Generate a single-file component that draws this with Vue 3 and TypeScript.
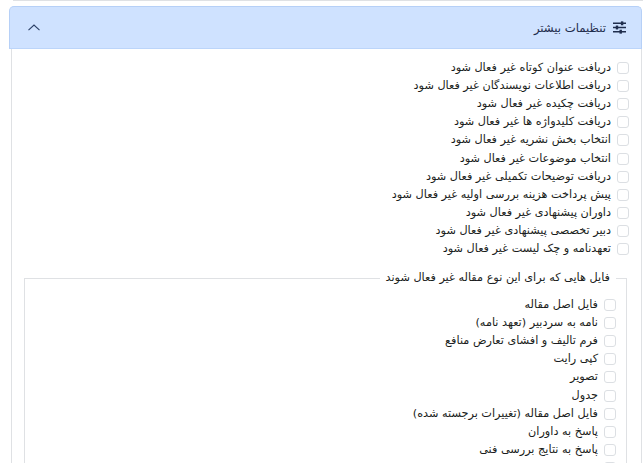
<script setup lang="ts">
const options = [
  'دریافت عنوان کوتاه غیر فعال شود',
  'دریافت اطلاعات نویسندگان غیر فعال شود',
  'دریافت چکیده غیر فعال شود',
  'دریافت کلیدواژه ها غیر فعال شود',
  'انتخاب بخش نشریه غیر فعال شود',
  'انتخاب موضوعات غیر فعال شود',
  'دریافت توضیحات تکمیلی غیر فعال شود',
  'پیش پرداخت هزینه بررسی اولیه غیر فعال شود',
  'داوران پیشنهادی غیر فعال شود',
  'دبیر تخصصی پیشنهادی غیر فعال شود',
  'تعهدنامه و چک لیست غیر فعال شود'
];

const files = [
  'فایل اصل مقاله',
  'نامه به سردبیر (تعهد نامه)',
  'فرم تالیف و افشای تعارض منافع',
  'کپی رایت',
  'تصویر',
  'جدول',
  'فایل اصل مقاله (تغییرات برجسته شده)',
  'پاسخ به داوران',
  'پاسخ به نتایج بررسی فنی'
];
</script>

<template>
  <div class="page" dir="rtl">
    <div class="top-line"></div>
    <section class="card">
      <header class="card-head">
        <div class="title">
          <svg class="title-icon" width="13" height="13" viewBox="0 0 14 14" aria-hidden="true">
            <path d="M0 2.5h14M0 7h14M0 11.5h14" stroke="#1f2d4d" stroke-width="1.6" />
            <rect x="8.5" y="0.4" width="2.6" height="4.2" fill="#1f2d4d" />
            <rect x="3" y="4.9" width="2.6" height="4.2" fill="#1f2d4d" />
            <rect x="7" y="9.4" width="2.6" height="4.2" fill="#1f2d4d" />
          </svg>
          <span>تنظیمات بیشتر</span>
        </div>
        <svg class="chevron" width="12" height="7" viewBox="0 0 12 7" aria-hidden="true">
          <path d="M0.5 6.2 6 1l5.5 5.2" fill="none" stroke="#2a3f66" stroke-width="1.1" />
        </svg>
      </header>
      <div class="card-body">
        <div class="check-list">
          <label v-for="item in options" :key="item" class="check-row">
            <span class="box"></span>
            <span>{{ item }}</span>
          </label>
        </div>
        <fieldset class="files">
          <legend>فایل هایی که برای این نوع مقاله غیر فعال شوند</legend>
          <div class="check-list">
            <label v-for="item in files" :key="item" class="check-row">
              <span class="box"></span>
              <span>{{ item }}</span>
            </label>
            <div class="check-row"><span class="box"></span></div>
          </div>
        </fieldset>
      </div>
    </section>
  </div>
</template>

<style scoped>
.page {
  width: 643px;
  height: 463px;
  overflow: hidden;
  box-sizing: border-box;
  background: #fff;
  font-family: "DejaVu Sans", "Noto Sans", sans-serif;
  font-size: 11.25px;
  color: #1a1d20;
}

.top-line {
  height: 1px;
  margin: 0 0 5px 13px;
  background: #dfe1e4;
}

.card {
  margin: 0 1px 0 9px;
  height: 500px;
}

.card-head {
  display: flex;
  align-items: center;
  justify-content: space-between;
  height: 43px;
  padding: 0 15px 0 18px;
  box-sizing: border-box;
  background: #cfe2ff;
  border: 1px solid #b6d0f7;
  border-bottom-color: #bcd5fa;
  border-radius: 5px 5px 0 0;
  color: #1f2d4d;
}

.title {
  display: flex;
  align-items: center;
  gap: 7px;
  font-size: 11.7px;
}

.card-body {
  margin-left: 2px;
  padding: 10px 12px 0 12px;
  border-left: 1px solid #dfe1e4;
  border-right: 1px solid #dfe1e4;
}

.check-list {
  display: flex;
  flex-direction: column;
}

.check-row {
  display: flex;
  align-items: center;
  gap: 6px;
  height: 18.1px;
  line-height: 18px;
}

.box {
  flex: none;
  width: 10px;
  height: 10px;
  background: #fff;
  border: 1px solid #dcdfe3;
  border-radius: 3px;
}

.files {
  margin: 12px 2px 0 0;
  padding: 0 10px 0 0;
  border: 1px solid #dfe1e4;
  border-bottom: 0;
  min-width: 0;
}

.files .check-list {
  margin-top: 10px;
}

legend {
  padding: 0 6px;
  margin: 0;
  line-height: 16px;
}
</style>
